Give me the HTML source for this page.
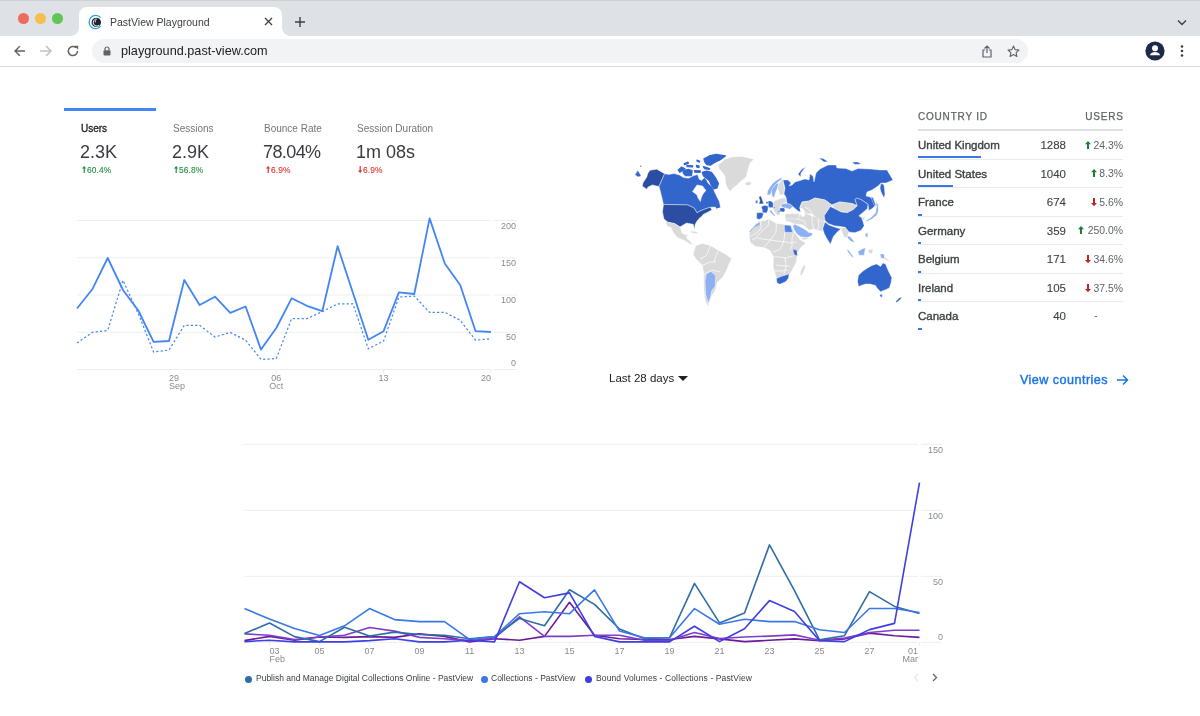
<!DOCTYPE html>
<html><head><meta charset="utf-8">
<style>
*{margin:0;padding:0;box-sizing:border-box}
html,body{width:1200px;height:716px;overflow:hidden;background:#fff;font-family:"Liberation Sans",sans-serif}
.abs{will-change:transform}
.abs{position:absolute;white-space:nowrap}
#strip{position:absolute;left:0;top:0;width:1200px;height:36px;background:#dee1e6;border-top:1px solid #cfd1d5}
.tl{position:absolute;top:12.3px;width:11px;height:11px;border-radius:50%}
#tab{position:absolute;left:79px;top:6px;width:203px;height:29px;background:#fff;border-radius:8px 8px 0 0}
#tab:before,#tab:after{content:"";position:absolute;bottom:0;width:8px;height:8px;background:radial-gradient(circle at 0 0,transparent 8px,#fff 8.5px)}
#tab:before{left:-8px;background:radial-gradient(circle at 0 0,#dee1e6 7.5px,#fff 8px)}
#tab:after{right:-8px;background:radial-gradient(circle at 100% 0,#dee1e6 7.5px,#fff 8px)}
#toolbar{position:absolute;left:0;top:36px;width:1200px;height:31px;background:#fff;border-bottom:1px solid #dadce0}
#omni{position:absolute;left:92px;top:3px;width:936px;height:24px;border-radius:12px;background:#f1f3f4}
.ax{font-family:"Liberation Sans",sans-serif;font-size:9px;fill:#878b90}
.kl{font-size:10px;color:#757575}
.kv{font-size:18px;color:#3a3c40}
.kc{font-size:8.4px;-webkit-text-stroke:0.1px currentColor}
.th{font-size:10px;color:#5f6368;letter-spacing:0.8px;-webkit-text-stroke:0.25px #5f6368}
.tn{font-size:11.5px;color:#3c4043;-webkit-text-stroke:0.35px #3c4043}
.tv{font-size:11.5px;color:#3c4043;text-align:right;-webkit-text-stroke:0.1px #3c4043}
.tp{font-size:10.4px;color:#5f6368;text-align:right}
.bar{position:absolute;height:2px;background:#3b78e7;left:918px}
.div{position:absolute;left:918px;width:205px;height:1px;background:#e8eaed}
</style></head><body>
<!-- browser chrome -->
<div id="strip">
  <div class="tl" style="left:17.9px;background:#ec6a5e"></div>
  <div class="tl" style="left:34.9px;background:#f4bf4f"></div>
  <div class="tl" style="left:51.6px;background:#61c554"></div>
  <div id="tab">
    <svg class="abs" style="left:9px;top:7px" width="16" height="16" viewBox="0 0 16 16">
      <path d="M12.6 3.6A6.6 6.6 0 1 0 12.8 12.2" fill="none" stroke="#2d9fe3" stroke-width="1.3"/>
      <circle cx="8.3" cy="8.4" r="4.7" fill="#1c2431"/>
      <path d="M11.2 11.2A3.6 3.6 0 1 1 8.6 4.9" fill="none" stroke="#fff" stroke-width="1"/>
      <circle cx="9" cy="7.6" r="2.4" fill="#1c2431"/>
      <path d="M8.6 5.6A2 2 0 0 0 7.4 8.4" fill="none" stroke="#fff" stroke-width="0.8"/>
    </svg>
    <div class="abs" style="left:30.5px;top:9px;font-size:10.5px;color:#3c4043">PastView Playground</div>
    <svg class="abs" style="left:185px;top:10px" width="9" height="9" viewBox="0 0 9 9"><path d="M1 1L8 8M8 1L1 8" stroke="#3c4043" stroke-width="1.3"/></svg>
  </div>
  <svg class="abs" style="left:294px;top:15px" width="12" height="12" viewBox="0 0 12 12"><path d="M6 1V11M1 6H11" stroke="#3c4043" stroke-width="1.4"/></svg>
  <svg class="abs" style="left:1177px;top:17.5px" width="10" height="7" viewBox="0 0 10 7"><path d="M1 1.5L5 5.5L9 1.5" fill="none" stroke="#3c4043" stroke-width="1.4"/></svg>
</div>
<div id="toolbar">
  <svg class="abs" style="left:12.5px;top:8px" width="14" height="14" viewBox="0 0 14 14"><path d="M12 7H2M6.8 2.2L2 7L6.8 11.8" fill="none" stroke="#5f6368" stroke-width="1.4"/></svg>
  <svg class="abs" style="left:39px;top:8px" width="14" height="14" viewBox="0 0 14 14"><path d="M1 7H12M7 2L12 7L7 12" fill="none" stroke="#bdc1c6" stroke-width="1.5"/></svg>
  <svg class="abs" style="left:66px;top:8px" width="14" height="14" viewBox="0 0 14 14"><path d="M11.5 7A4.6 4.6 0 1 1 10 3.6" fill="none" stroke="#5f6368" stroke-width="1.5"/><path d="M8.3 1.8H12.2V5.7Z" fill="#5f6368"/></svg>
  <div id="omni">
    <svg class="abs" style="left:11px;top:7px" width="8" height="10" viewBox="0 0 8 10"><path d="M2 4.5V3A2 2 0 0 1 6 3V4.5" fill="none" stroke="#5f6368" stroke-width="1.2"/><rect x="0.5" y="4.3" width="7" height="5.2" rx="1" fill="#5f6368"/></svg>
    <div class="abs" style="left:29px;top:4.5px;font-size:12.7px;color:#202124">playground.past-view.com</div>
    <svg class="abs" style="left:889px;top:6px" width="12" height="13" viewBox="0 0 12 13"><path d="M4 5H2V12H10V5H8M6 8V1M3.5 3.5L6 1L8.5 3.5" fill="none" stroke="#5f6368" stroke-width="1.2"/></svg>
    <svg class="abs" style="left:915px;top:6px" width="13" height="13" viewBox="0 0 13 13"><path d="M6.5 1L8.1 4.6L12 5L9.1 7.6L9.9 11.5L6.5 9.5L3.1 11.5L3.9 7.6L1 5L4.9 4.6Z" fill="none" stroke="#5f6368" stroke-width="1.1" stroke-linejoin="round"/></svg>
  </div>
  <svg class="abs" style="left:1145px;top:5px" width="20" height="20" viewBox="0 0 20 20"><circle cx="10" cy="10" r="9.6" fill="#1e2a4a"/><circle cx="10" cy="7.3" r="3" fill="#fff"/><path d="M4.8 14.2C5.5 11.8 8 11 10 11S14.5 11.8 15.2 14.2Z" fill="#fff"/></svg>
  <svg class="abs" style="left:1180px;top:8px" width="4" height="14" viewBox="0 0 4 14"><circle cx="2" cy="2.5" r="1.3" fill="#3c4043"/><circle cx="2" cy="7" r="1.3" fill="#3c4043"/><circle cx="2" cy="11.5" r="1.3" fill="#3c4043"/></svg>
</div>

<!-- KPI tabs -->
<div class="abs" style="left:64px;top:108px;width:92px;height:3px;background:#4285f4"></div>
<div class="abs kl" style="left:81px;top:123px;color:#202124;-webkit-text-stroke:0.3px #202124">Users</div>
<div class="abs kv" style="left:80px;top:142px">2.3K</div>
<svg class="abs" style="left:82.3px;top:166.2px" width="4.4" height="7" viewBox="0 0 4.4 7"><path d="M2.2 0L4.4 2.6H2.8V7H1.6V2.6H0Z" fill="#1e8e3e"/></svg><div class="abs kc" style="left:86.5px;top:165px;letter-spacing:0.1px;color:#1e8e3e">60.4%</div>
<div class="abs kl" style="left:173px;top:123px">Sessions</div>
<div class="abs kv" style="left:172px;top:142px">2.9K</div>
<svg class="abs" style="left:174.3px;top:166.2px" width="4.4" height="7" viewBox="0 0 4.4 7"><path d="M2.2 0L4.4 2.6H2.8V7H1.6V2.6H0Z" fill="#1e8e3e"/></svg><div class="abs kc" style="left:178.5px;top:165px;letter-spacing:0.1px;color:#1e8e3e">56.8%</div>
<div class="abs kl" style="left:264px;top:123px">Bounce Rate</div>
<div class="abs kv" style="left:263px;top:142px;letter-spacing:-0.6px">78.04%</div>
<svg class="abs" style="left:266.3px;top:166.2px" width="4.4" height="7" viewBox="0 0 4.4 7"><path d="M2.2 0L4.4 2.6H2.8V7H1.6V2.6H0Z" fill="#d93025"/></svg><div class="abs kc" style="left:270.5px;top:165px;letter-spacing:0.1px;color:#d93025">6.9%</div>
<div class="abs kl" style="left:357px;top:123px">Session Duration</div>
<div class="abs kv" style="left:356px;top:142px">1m 08s</div>
<svg class="abs" style="left:358.3px;top:166.2px" width="4.4" height="7" viewBox="0 0 4.4 7"><path d="M2.2 7L4.4 4.4H2.8V0H1.6V4.4H0Z" fill="#d93025"/></svg><div class="abs kc" style="left:362.5px;top:165px;letter-spacing:0.1px;color:#d93025">6.9%</div>

<svg class="abs" style="left:0;top:0" width="1200" height="716" viewBox="0 0 1200 716">
<line x1="77" y1="220.5" x2="491" y2="220.5" stroke="#eeeeee" stroke-width="1"/>
<line x1="494" y1="220.5" x2="517" y2="220.5" stroke="#eeeeee" stroke-width="1"/>
<line x1="77" y1="257.75" x2="491" y2="257.75" stroke="#eeeeee" stroke-width="1"/>
<line x1="494" y1="257.75" x2="517" y2="257.75" stroke="#eeeeee" stroke-width="1"/>
<line x1="77" y1="295" x2="491" y2="295" stroke="#eeeeee" stroke-width="1"/>
<line x1="494" y1="295" x2="517" y2="295" stroke="#eeeeee" stroke-width="1"/>
<line x1="77" y1="332.25" x2="491" y2="332.25" stroke="#eeeeee" stroke-width="1"/>
<line x1="494" y1="332.25" x2="517" y2="332.25" stroke="#eeeeee" stroke-width="1"/>
<line x1="77" y1="369.5" x2="491" y2="369.5" stroke="#eeeeee" stroke-width="1"/>
<line x1="494" y1="369.5" x2="517" y2="369.5" stroke="#eeeeee" stroke-width="1"/>
<text x="516" y="229" text-anchor="end" class="ax">200</text>
<text x="516" y="266" text-anchor="end" class="ax">150</text>
<text x="516" y="303" text-anchor="end" class="ax">100</text>
<text x="516" y="340" text-anchor="end" class="ax">50</text>
<text x="516" y="366" text-anchor="end" class="ax">0</text>
<line x1="169.0" y1="369" x2="169.0" y2="373" stroke="#eeeeee"/>
<text x="169.0" y="380.6" text-anchor="start" class="ax">29</text>
<text x="169.0" y="388.8" text-anchor="start" class="ax">Sep</text>
<line x1="276.3" y1="369" x2="276.3" y2="373" stroke="#eeeeee"/>
<text x="276.3" y="380.6" text-anchor="middle" class="ax">06</text>
<text x="276.3" y="388.8" text-anchor="middle" class="ax">Oct</text>
<line x1="383.6" y1="369" x2="383.6" y2="373" stroke="#eeeeee"/>
<text x="383.6" y="380.6" text-anchor="middle" class="ax">13</text>
<line x1="490.9" y1="369" x2="490.9" y2="373" stroke="#eeeeee"/>
<text x="490.9" y="380.6" text-anchor="end" class="ax">20</text>
<polyline points="77.0,343.0 92.3,332.4 107.7,330.4 123.0,280.3 138.3,313.6 153.6,352.0 169.0,350.0 184.3,325.3 199.6,325.3 215.0,337.0 230.3,332.4 245.6,340.2 261.0,359.4 276.3,358.6 291.6,318.7 306.9,318.7 322.3,311.6 337.6,303.8 352.9,303.8 368.3,348.8 383.6,341.0 398.9,297.1 414.3,296.0 429.6,312.4 444.9,312.4 460.2,320.3 475.6,340.2 490.9,338.7" fill="none" stroke="#4285f4" stroke-width="1.2" stroke-dasharray="2.2,2.2"/>
<polyline points="77.0,308.5 92.3,289.3 107.7,258.0 123.0,290.0 138.3,310.5 153.6,341.8 169.0,341.0 184.3,280.0 199.6,305.0 215.0,296.7 230.3,312.8 245.6,306.5 261.0,349.6 276.3,328.0 291.6,298.3 306.9,305.8 322.3,311.2 337.6,246.2 352.9,292.8 368.3,339.8 383.6,331.2 398.9,292.4 414.3,294.0 429.6,218.4 444.9,263.8 460.2,285.0 475.6,331.2 490.9,332.0" fill="none" stroke="#4285f4" stroke-width="1.8" stroke-linejoin="round"/>
<line x1="244" y1="444.3" x2="918" y2="444.3" stroke="#eeeeee"/>
<line x1="921" y1="444.3" x2="942" y2="444.3" stroke="#eeeeee"/>
<text x="943" y="453.1" text-anchor="end" class="ax">150</text>
<line x1="244" y1="510.3" x2="918" y2="510.3" stroke="#eeeeee"/>
<line x1="921" y1="510.3" x2="942" y2="510.3" stroke="#eeeeee"/>
<text x="943" y="519.1" text-anchor="end" class="ax">100</text>
<line x1="244" y1="576.3" x2="918" y2="576.3" stroke="#eeeeee"/>
<line x1="921" y1="576.3" x2="942" y2="576.3" stroke="#eeeeee"/>
<text x="943" y="585.1" text-anchor="end" class="ax">50</text>
<line x1="244" y1="642.3" x2="918" y2="642.3" stroke="#eeeeee"/>
<line x1="921" y1="642.3" x2="942" y2="642.3" stroke="#eeeeee"/>
<text x="943" y="639.8" text-anchor="end" class="ax">0</text>
<line x1="269.5" y1="642" x2="269.5" y2="646" stroke="#eeeeee"/>
<text x="269.5" y="654" class="ax">03</text>
<text x="269.5" y="662.2" class="ax">Feb</text>
<line x1="319.5" y1="642" x2="319.5" y2="646" stroke="#eeeeee"/>
<text x="319.5" y="654" text-anchor="middle" class="ax">05</text>
<line x1="369.5" y1="642" x2="369.5" y2="646" stroke="#eeeeee"/>
<text x="369.5" y="654" text-anchor="middle" class="ax">07</text>
<line x1="419.5" y1="642" x2="419.5" y2="646" stroke="#eeeeee"/>
<text x="419.5" y="654" text-anchor="middle" class="ax">09</text>
<line x1="469.5" y1="642" x2="469.5" y2="646" stroke="#eeeeee"/>
<text x="469.5" y="654" text-anchor="middle" class="ax">11</text>
<line x1="519.5" y1="642" x2="519.5" y2="646" stroke="#eeeeee"/>
<text x="519.5" y="654" text-anchor="middle" class="ax">13</text>
<line x1="569.5" y1="642" x2="569.5" y2="646" stroke="#eeeeee"/>
<text x="569.5" y="654" text-anchor="middle" class="ax">15</text>
<line x1="619.5" y1="642" x2="619.5" y2="646" stroke="#eeeeee"/>
<text x="619.5" y="654" text-anchor="middle" class="ax">17</text>
<line x1="669.5" y1="642" x2="669.5" y2="646" stroke="#eeeeee"/>
<text x="669.5" y="654" text-anchor="middle" class="ax">19</text>
<line x1="719.5" y1="642" x2="719.5" y2="646" stroke="#eeeeee"/>
<text x="719.5" y="654" text-anchor="middle" class="ax">21</text>
<line x1="769.5" y1="642" x2="769.5" y2="646" stroke="#eeeeee"/>
<text x="769.5" y="654" text-anchor="middle" class="ax">23</text>
<line x1="819.5" y1="642" x2="819.5" y2="646" stroke="#eeeeee"/>
<text x="819.5" y="654" text-anchor="middle" class="ax">25</text>
<line x1="869.5" y1="642" x2="869.5" y2="646" stroke="#eeeeee"/>
<text x="869.5" y="654" text-anchor="middle" class="ax">27</text>
<line x1="919.5" y1="642" x2="919.5" y2="646" stroke="#eeeeee"/>
<text x="918" y="654" text-anchor="end" class="ax">01</text>
<text x="918" y="662.2" text-anchor="end" class="ax">Mar</text>
<polyline points="244.5,640.6 269.5,636.4 294.5,640.2 319.5,637.0 344.5,637.4 369.5,636.6 394.5,637.4 419.5,633.9 444.5,636.4 469.5,641.9 494.5,638.7 519.5,640.2 544.5,636.4 569.5,602.3 594.5,635.3 619.5,638.7 644.5,639.5 669.5,639.5 694.5,636.4 719.5,638.9 744.5,641.6 769.5,640.3 794.5,638.9 819.5,640.7 844.5,639.0 869.5,633.1 894.5,635.8 919.5,637.4" fill="none" stroke="#6a1b9a" stroke-width="1.6" stroke-linejoin="round"/>
<polyline points="244.5,633.9 269.5,635.3 294.5,639.5 319.5,637.0 344.5,635.3 369.5,627.5 394.5,631.1 419.5,637.4 444.5,638.7 469.5,640.6 494.5,638.1 519.5,616.8 544.5,636.4 569.5,636.4 594.5,635.3 619.5,635.3 644.5,640.2 669.5,640.2 694.5,632.5 719.5,638.5 744.5,637.0 769.5,636.1 794.5,634.9 819.5,640.3 844.5,638.1 869.5,632.5 894.5,630.3 919.5,630.3" fill="none" stroke="#7e3fc8" stroke-width="1.6" stroke-linejoin="round"/>
<polyline points="244.5,633.6 269.5,623.0 294.5,636.6 319.5,641.6 344.5,627.3 369.5,636.0 394.5,632.1 419.5,634.5 444.5,635.3 469.5,638.7 494.5,636.6 519.5,618.4 544.5,625.8 569.5,589.8 594.5,604.4 619.5,629.0 644.5,638.7 669.5,637.8 694.5,583.4 719.5,622.9 744.5,613.0 769.5,544.9 794.5,590.6 819.5,639.8 844.5,635.7 869.5,591.6 894.5,606.4 919.5,613.5" fill="none" stroke="#2e6da4" stroke-width="1.6" stroke-linejoin="round"/>
<polyline points="244.5,608.6 269.5,619.1 294.5,628.6 319.5,635.6 344.5,625.8 369.5,608.6 394.5,619.6 419.5,621.6 444.5,621.6 469.5,639.5 494.5,636.6 519.5,613.7 544.5,611.7 569.5,613.7 594.5,589.8 619.5,631.1 644.5,637.8 669.5,637.8 694.5,608.6 719.5,624.2 744.5,619.3 769.5,621.6 794.5,621.6 819.5,629.8 844.5,632.5 869.5,608.5 894.5,608.5 919.5,612.5" fill="none" stroke="#3b78e7" stroke-width="1.6" stroke-linejoin="round"/>
<polyline points="244.5,641.6 269.5,640.2 294.5,641.9 319.5,641.9 344.5,641.9 369.5,640.6 394.5,638.7 419.5,641.9 444.5,641.9 469.5,640.2 494.5,641.9 519.5,581.8 544.5,597.7 569.5,592.9 594.5,636.4 619.5,641.9 644.5,641.9 669.5,641.9 694.5,626.2 719.5,641.6 744.5,628.8 769.5,600.6 794.5,611.5 819.5,640.7 844.5,641.6 869.5,629.6 894.5,623.4 919.5,482.7" fill="none" stroke="#3f3ee3" stroke-width="1.6" stroke-linejoin="round"/>
<polygon points="718.2,164.8 725,159.2 733,156.8 741.7,156.4 754,159.2 750,163 748.4,168.1 746.2,177 741,181 737.2,184.9 733,188 730.5,191.6 727.5,188 726,184.9 724.9,176 722,172 719.3,169.2" fill="#dadada" stroke="#fff" stroke-width="0.4"/>
<polygon points="745,183 749,181.5 752,183 749,185.5 745.5,185" fill="#dadada" stroke="#fff" stroke-width="0.4"/>
<polygon points="650.1,170.3 656.8,169.2 664.6,173.7 659,186.5 652.3,184.9 648,187 646.8,189.3 642.3,186 643,183 644.5,180.4 646.8,177 648,173" fill="#2b4ea3" stroke="#fff" stroke-width="0.4"/>
<polygon points="635,174.8 637.8,170.3 641.2,176 638,177" fill="#3366cc" stroke="#fff" stroke-width="0.4"/>
<polygon points="640,165.5 641.5,165.5 641.5,167 640,167" fill="#3366cc" stroke="#fff" stroke-width="0.4"/>
<path d="M664.6,173.7 L669,174.5 L674,173.5 L679.9,175.2 L683.4,177.6 L688.7,178.2 L693.4,175.8 L697.5,174.6 L699.2,179.3 L701.6,180.5 L704.5,177.6 L706.8,180.5 L708,183 L711,186 L713,188 L714.9,192.7 L717,197 L719.3,201.6 L720.5,207.2 L716,207 L710.4,207.2 L705,209 L700,211 L697,212.8 L694,208 L688,205 L663.5,204.4 L662,198 L660,190 L659,186.5Z M692.5,191.6 L697,184.9 L702.6,186 L705.9,190.4 L703,194 L701.5,197.1 L700.4,201.6 L698,198 L697,194.9Z " fill="#3366cc" fill-rule="evenodd" stroke="#fff" stroke-width="0.4"/>
<polygon points="703.9,158.8 709.2,155.9 716.2,154.4 725.6,155.9 720.9,159.4 715.1,162.3 710.4,165.2 706.8,164.7 704.5,161.7" fill="#3366cc" stroke="#3366cc" stroke-width="1.1" stroke-linejoin="round"/>
<polygon points="703.3,166.4 706.8,167.6 709.8,168.8 709.2,169.4 704.5,168.8" fill="#3366cc" stroke="#3366cc" stroke-width="1.1" stroke-linejoin="round"/>
<polygon points="702.2,172.3 706.8,171.1 711.5,172.3 715.1,177 718.6,183.4 717,188 714,189 711.5,186 709.2,180.5 703.3,175.8" fill="#3366cc" stroke="#3366cc" stroke-width="1.1" stroke-linejoin="round"/>
<polygon points="682.8,170.5 688.7,169.4 692.2,170.5 691.6,175.8 685.7,175.8 683.4,173.5" fill="#3366cc" stroke="#3366cc" stroke-width="1.1" stroke-linejoin="round"/>
<polygon points="678.1,169.9 681.6,167 685.1,168.8 679.9,172.3" fill="#3366cc" stroke="#3366cc" stroke-width="1.1" stroke-linejoin="round"/>
<polygon points="684,163.8 688,162 688.5,163.2 684.5,164.8" fill="#3366cc" stroke="#3366cc" stroke-width="1.1" stroke-linejoin="round"/>
<polygon points="686.9,165.2 692.8,165.8 692.5,167 687,166.6" fill="#3366cc" stroke="#3366cc" stroke-width="1.1" stroke-linejoin="round"/>
<polygon points="696.9,160 699.8,161.2 699.5,162.2 697,161.2" fill="#3366cc" stroke="#3366cc" stroke-width="1.1" stroke-linejoin="round"/>
<polygon points="696.3,165.2 699.2,166 699,167.8 696.5,167" fill="#3366cc" stroke="#3366cc" stroke-width="1.1" stroke-linejoin="round"/>
<polygon points="694.5,170.5 700.4,170.8 700,172.5 694.8,172.3" fill="#3366cc" stroke="#3366cc" stroke-width="1.1" stroke-linejoin="round"/>
<polygon points="715.5,205 718,204 719.5,207 716.5,208" fill="#3366cc" stroke="#3366cc" stroke-width="1.1" stroke-linejoin="round"/>
<polygon points="663.5,204.4 688,205 694,208 697,212.8 700,211 705,209 710.4,207.2 711.9,210 708,212 703.5,214.2 701,217 699.8,217.7 697,221 695.2,224.3 694.5,228.9 693.2,224.3 686.5,223 679.9,226.9 674.6,223.6 668,222.3 664,219 662.5,212" fill="#2b4ea3" stroke="#fff" stroke-width="0.4"/>
<polygon points="665.3,222.3 668,222.3 674.6,223.6 679.9,226.9 682.6,233.6 686.5,234.9 687.9,233.6 686.5,238.2 690.5,241.5 693.2,245.5 690.5,244.2 683.9,240.2 677.2,237.6 673.3,232.2 670.6,226.9 668,226.9" fill="#dadada" stroke="#fff" stroke-width="0.4"/>
<polygon points="689,231 696,231.5 699,233.5 693,233.2" fill="#dadada" stroke="#fff" stroke-width="0.4"/>
<polygon points="695.8,245.5 702.5,243.5 710.4,245.5 718.4,250.2 726.3,254.8 731.6,258.8 729,264.1 726.3,270.7 722.4,277.4 717,282.7 715.7,289.3 711.7,295.9 709.1,302.6 707.8,306.5 705.1,299.9 703.8,289.3 703.8,274.7 702.5,265.4 695.8,258.8 693.2,254.8 694.5,249.5" fill="#dadada" stroke="#fff" stroke-width="0.4"/>
<polygon points="706.4,273.4 711.1,271.4 715.7,276 715.1,286.6 711.7,290.6 710.4,297.3 708.4,303.2 705.8,294.6 705.1,281.3" fill="#8cb0f2" stroke="#fff" stroke-width="0.4"/>
<polygon points="749.2,233.9 751.3,228.6 755.5,225.5 760.7,221.3 769.1,219.2 776.4,223.4 784.8,224.4 791.1,225.5 794.3,231.8 799.5,239.1 805.8,243.3 801.6,246.4 797.4,252.7 796.3,262.2 790.1,273.7 786.9,280 779.6,284.2 776.4,277.9 773.3,267.4 773.3,256.9 770.1,250.6 763.9,247.5 755.5,246.4 750.2,242.2" fill="#dadada" stroke="#fff" stroke-width="0.4"/>
<polygon points="755.5,224.4 760.7,221.3 759.7,225.5 754.4,227.6 750.2,232.8 749.2,231.8" fill="#8cb0f2" stroke="#fff" stroke-width="0.4"/>
<polygon points="784.3,225 790.6,225.5 792.7,232.3 784.8,232.3" fill="#4f82e8" stroke="#fff" stroke-width="0.4"/>
<polygon points="792.7,249.6 796.9,250.1 797.4,255.9 794.3,254.8" fill="#3366cc" stroke="#fff" stroke-width="0.4"/>
<polygon points="776.4,278.5 781,276.5 786.9,274.7 789,273.7 788.5,278 786,281.5 780,284.2 777,283" fill="#3366cc" stroke="#fff" stroke-width="0.4"/>
<polygon points="800,274.5 801.5,269 804.5,264.5 805.5,266 804,271 801.5,275.5" fill="#dadada" stroke="#fff" stroke-width="0.4"/>
<polygon points="785.1,214.1 792,213.5 799.7,214.1 799.7,219 792,219.5 785.1,219" fill="#dadada" stroke="#fff" stroke-width="0.4"/>
<polygon points="785.1,219 798.8,218.9 800,214 804.5,213 808,214 812,216 818,217 824,218.4 825,220.4 822.7,228.8 822.7,231.4 817.7,230.2 813.3,228.9 808.9,230.2 806,227 802,224.5 797,224.2 793,223.5 790,222 786,221" fill="#dadada" stroke="#fff" stroke-width="0.4"/>
<polygon points="792.8,225.8 795,224.3 801.3,227.5 805.7,230 808.9,232.5 812.8,233.2 811.6,235.8 807,237.8 800.5,236.8 796.5,233.5 794,229.5" fill="#8cb0f2" stroke="#fff" stroke-width="0.4"/>
<polygon points="801,237 807,238 809.5,239 803,240" fill="#dadada" stroke="#fff" stroke-width="0.4"/>
<polygon points="774,201.2 777.4,199.8 781.3,198.3 785.2,197.8 786.7,202.2 781.8,203.7 780.3,207.6 779.3,211.5 780.3,214.4 777.4,215.4 775.4,213 773.5,209.6 773,206.6 773.5,203.7" fill="#dadada" stroke="#fff" stroke-width="0.4"/>
<polygon points="785.2,197.8 786,197 787,203 786.7,202.2" fill="#dadada" stroke="#fff" stroke-width="0.4"/>
<polygon points="767.1,194.9 767.6,191 770,187 773,183 777,180 781.2,177.5 782,179 778,182 774,186.5 771,192.9 769.6,194.9" fill="#8cb0f2" stroke="#fff" stroke-width="0.4"/>
<polygon points="771.5,190 774,186.5 777,183 778.5,184 777.5,188 775.4,192.9 774,197.8 772,195.9" fill="#8cb0f2" stroke="#fff" stroke-width="0.4"/>
<polygon points="778.5,184 782,179 783,179.5 784.1,186 784.1,194.5 780,195 778.2,190 777.5,188" fill="#dadada" stroke="#fff" stroke-width="0.4"/>
<polygon points="758.7,197 761,196 762,199 763.6,203.8 759,204 760,200.5" fill="#2b4ea3" stroke="#fff" stroke-width="0.4"/>
<polygon points="755.7,200.4 757.7,200.4 757.7,203.3 755.7,203.3" fill="#3366cc" stroke="#fff" stroke-width="0.4"/>
<polygon points="761.1,207 764,205.3 768,206 768,210 766.5,213.1 762,212.5 762.5,210" fill="#3366cc" stroke="#fff" stroke-width="0.4"/>
<polygon points="768,201 771,200.9 773.3,203 773,207.7 768.5,207.5" fill="#3366cc" stroke="#fff" stroke-width="0.4"/>
<polygon points="756.7,212.8 761,212.6 763.6,213.5 762,218 759,219.5 756.7,218.5" fill="#3366cc" stroke="#fff" stroke-width="0.4"/>
<polygon points="769.6,210.5 771.5,210 773,213 775.4,215.4 774.4,215.9 772,214 770,212" fill="#8cb0f2" stroke="#fff" stroke-width="0.4"/>
<polygon points="766.1,201.7 768.1,201.7 768.1,203.7 766.1,203.7" fill="#3366cc" stroke="#fff" stroke-width="0.4"/>
<polygon points="773.5,207.1 775,207.1 775,208.6 773.5,208.6" fill="#3366cc" stroke="#fff" stroke-width="0.4"/>
<polygon points="778.3,210.5 779.8,210.5 779.8,212.5 778.3,212.5" fill="#3366cc" stroke="#fff" stroke-width="0.4"/>
<polygon points="779.7,208 784,207.7 785.1,210 784,212.1 780,211.5" fill="#3366cc" stroke="#fff" stroke-width="0.4"/>
<polygon points="781.2,204 786,203.3 790,204 792.9,206.5 790,209.2 785,208 781.5,207" fill="#8cb0f2" stroke="#fff" stroke-width="0.4"/>
<polygon points="783,180 788,180 791,183 789,186 792,185 795,182 805,179 809,180 810,174 813,176 814,182 816,173 820,169 828,165 836,165 837,168 846,168.5 852,171 858,168.5 870,169 880,170 887,170 890,175 893,180 886,183 881,183 878,186 872,190 867,192 866,196 870,197 873.4,199.6 875.7,205 871.9,208.8 868.8,210.4 868,204.2 861.1,199.6 856.5,198.1 855,199.6 857.3,205.8 851.9,203.5 839.6,201.9 831.9,205 825,200 815,198 809,201 802,202 800,207 801,212 798,211 792.9,206.5 790,204 786,203.3 787,203 786,197 784,194 785,188" fill="#3366cc" stroke="#fff" stroke-width="0.4"/>
<polygon points="881,183 884,185 885,194 884,198 881,192 880,188" fill="#3366cc" stroke="#fff" stroke-width="0.4"/>
<polygon points="871,197 873,197.5 876,206 874,205" fill="#3366cc" stroke="#fff" stroke-width="0.4"/>
<polygon points="798,174 802,169 806.5,167 804,169 801,173 800.5,177" fill="#3366cc" stroke="#fff" stroke-width="0.4"/>
<polygon points="819,158 823,158.5 828,161.5 824,162" fill="#3366cc" stroke="#fff" stroke-width="0.4"/>
<polygon points="852,162 858,162 861,164 855,164.5" fill="#3366cc" stroke="#fff" stroke-width="0.4"/>
<polygon points="800,207 802,202 809,201 815,198 825,200 831.9,205 830.4,206.5 824.2,215.7 825,220.4 822.7,222 818,219 812,214 806,213.5 801,212" fill="#dadada" stroke="#fff" stroke-width="0.4"/>
<polygon points="799.6,208 802.5,208.5 804.8,211.5 804.6,215.8 802.3,217 800.6,214.5 801,211.2" fill="#ffffff" stroke="#fff" stroke-width="0.4"/>
<polygon points="831.9,205 839.6,201.9 851.9,203.5 857.3,205.8 853.4,209.6 847.3,212.7 841.1,211.9 835,208.8" fill="#dadada" stroke="#fff" stroke-width="0.4"/>
<polygon points="824.2,215.7 830.4,206.5 835,208.8 841.1,211.9 847.3,212.7 853.4,209.6 857.3,205.8 855,199.6 856.5,198.1 861.1,199.6 868,204.2 867.3,208.8 862.6,212.7 858.8,215.7 861.9,218.1 864.2,225.7 861.1,230.3 855,232.7 848.8,231.9 845,227.3 840.4,226.5 834.2,225.7 828.1,223.4 825,220.4" fill="#3366cc" stroke="#fff" stroke-width="0.4"/>
<polygon points="822.7,228.8 825,221.9 828.8,224.9 835,227.3 840.4,228.8 842.7,227.3 837.3,231.9 833.4,236.5 830.4,244.2 826.5,238 824.2,233.4" fill="#3366cc" stroke="#fff" stroke-width="0.4"/>
<polygon points="841.1,228 845,227.3 848.8,231.9 847.3,238 844,237 842,232" fill="#dadada" stroke="#fff" stroke-width="0.4"/>
<polygon points="847.3,235.7 850,236.5 855,242.6 851,241.5 848,238.5" fill="#8cb0f2" stroke="#fff" stroke-width="0.4"/>
<polygon points="862,217 865,216.5 864.5,220 862.5,220" fill="#dadada" stroke="#fff" stroke-width="0.4"/>
<polygon points="876,202 878,204 878.5,210 877,215 872,219 867,221.5 866,220.5 871,217.5 875.5,213 876.5,207" fill="#8cb0f2" stroke="#fff" stroke-width="0.4"/>
<polygon points="865,234 868,232.5 867.5,237.5 865.5,236.5" fill="#8cb0f2" stroke="#fff" stroke-width="0.4"/>
<polygon points="846.6,248.9 849,250.5 854.1,257.7 852,257 848,252" fill="#8cb0f2" stroke="#fff" stroke-width="0.4"/>
<polygon points="857.9,251.4 862,249 865.4,247.7 864.1,255.2 859.1,255.2" fill="#8cb0f2" stroke="#fff" stroke-width="0.4"/>
<polygon points="868,250 873,249 872,254 869,253" fill="#dadada" stroke="#fff" stroke-width="0.4"/>
<polygon points="880,254 884,254 885,259 881,258" fill="#8cb0f2" stroke="#fff" stroke-width="0.4"/>
<polygon points="884.3,256.5 890.5,261.5 885.5,260.2" fill="#dadada" stroke="#fff" stroke-width="0.4"/>
<polygon points="858.5,275.3 863,271 867.9,267.8 872,265.5 876.7,264 880.5,266.5 883,263 885.5,264 888,270 891.8,277.8 891,283 889.3,287.9 885,290 880.5,291.7 877,288 875.5,285.4 870,284 865.4,284.1 861,285.5 858.5,286.6 857.5,281" fill="#3366cc" stroke="#fff" stroke-width="0.4"/>
<polygon points="879.9,294.2 882.4,294.5 882,297.3 880,296.5" fill="#3366cc" stroke="#fff" stroke-width="0.4"/>
<polygon points="895.6,301.7 899,298 901.9,296.7 900,300 896.5,302.5" fill="#3366cc" stroke="#fff" stroke-width="0.4"/>
<polyline points="760.7,221.3 761,228 757,233 750.5,236" fill="none" stroke="#fff" stroke-width="0.7"/>
<polyline points="769.1,219.2 768,226 762,231 756,238 752,240" fill="none" stroke="#fff" stroke-width="0.7"/>
<polyline points="776.4,223.4 776,232 772,238 768,243 764,247" fill="none" stroke="#fff" stroke-width="0.7"/>
<polyline points="784.8,232.3 784,240 782,246 779,250 773,252" fill="none" stroke="#fff" stroke-width="0.7"/>
<polyline points="757,238 763,239 770,240 777,241 786,242 792,243 797,242" fill="none" stroke="#fff" stroke-width="0.7"/>
<polyline points="794.3,231.8 792,238 792,246 790,250" fill="none" stroke="#fff" stroke-width="0.7"/>
<polyline points="773.3,256.9 780,257 786,258 793,256" fill="none" stroke="#fff" stroke-width="0.7"/>
<polyline points="776,265 783,266 790,266" fill="none" stroke="#fff" stroke-width="0.7"/>
<polyline points="774,271 781,271 788,270" fill="none" stroke="#fff" stroke-width="0.7"/>
<polyline points="785,258 786,266 784,274" fill="none" stroke="#fff" stroke-width="0.7"/>
<polyline points="702.5,265.4 710,262 716,262" fill="none" stroke="#fff" stroke-width="0.7"/>
<polyline points="703.8,274.7 712,270 720,272" fill="none" stroke="#fff" stroke-width="0.7"/>
<polyline points="710.4,245.5 708,252 706,256 700,259" fill="none" stroke="#fff" stroke-width="0.7"/>
<polyline points="718.4,250.2 716,256 714,262" fill="none" stroke="#fff" stroke-width="0.7"/>
<polyline points="805,207 810,210 812,214" fill="none" stroke="#fff" stroke-width="0.7"/>
<polyline points="812,214 812,222 814,230" fill="none" stroke="#fff" stroke-width="0.7"/>
<polyline points="818,219 819,226 817,231" fill="none" stroke="#fff" stroke-width="0.7"/>
<polyline points="797,219 804,221 806,225" fill="none" stroke="#fff" stroke-width="0.7"/>
</svg>

<!-- table -->
<div class="abs th" style="left:918px;top:111.3px">COUNTRY ID</div>
<div class="abs th" style="left:1023px;width:100.8px;text-align:right;top:111.3px;letter-spacing:0.8px;margin-right:-0.8px">USERS</div>
<div class="abs" style="left:918px;top:129px;width:205px;height:2px;background:#e0e0e0"></div>

<div class="abs tn" style="left:918px;top:139.1px">United Kingdom</div>
<div class="abs tv" style="left:1000px;top:139.1px;width:66px">1288</div>
<div class="abs tp" style="left:1040px;top:139.7px;width:83px">24.3%</div>
<svg class="abs" style="left:1084.8px;top:140.8px" width="6" height="8.2" viewBox="0 0 6 8.2"><path d="M3 0L6 3.3H4V8.2H2V3.3H0Z" fill="#1e7e34"/></svg>
<div class="bar" style="top:156.4px;width:62.5px"></div>
<div class="div" style="top:158.6px"></div>
<div class="abs tn" style="left:918px;top:167.7px">United States</div>
<div class="abs tv" style="left:1000px;top:167.7px;width:66px">1040</div>
<div class="abs tp" style="left:1040px;top:168.2px;width:83px">8.3%</div>
<svg class="abs" style="left:1091.2px;top:169.3px" width="6" height="8.2" viewBox="0 0 6 8.2"><path d="M3 0L6 3.3H4V8.2H2V3.3H0Z" fill="#1e7e34"/></svg>
<div class="bar" style="top:185.0px;width:35px"></div>
<div class="div" style="top:187.2px"></div>
<div class="abs tn" style="left:918px;top:196.2px">France</div>
<div class="abs tv" style="left:1000px;top:196.2px;width:66px">674</div>
<div class="abs tp" style="left:1040px;top:196.8px;width:83px">5.6%</div>
<svg class="abs" style="left:1091.2px;top:197.9px" width="6" height="8.2" viewBox="0 0 6 8.2"><path d="M3 8.2L6 4.9H4V0H2V4.9H0Z" fill="#c5221f"/></svg>
<div class="bar" style="top:213.5px;width:3.5px"></div>
<div class="div" style="top:215.7px"></div>
<div class="abs tn" style="left:918px;top:224.8px">Germany</div>
<div class="abs tv" style="left:1000px;top:224.8px;width:66px">359</div>
<div class="abs tp" style="left:1040px;top:225.3px;width:83px">250.0%</div>
<svg class="abs" style="left:1078.4px;top:226.4px" width="6" height="8.2" viewBox="0 0 6 8.2"><path d="M3 0L6 3.3H4V8.2H2V3.3H0Z" fill="#1e7e34"/></svg>
<div class="bar" style="top:242.1px;width:2.5px"></div>
<div class="div" style="top:244.2px"></div>
<div class="abs tn" style="left:918px;top:253.3px">Belgium</div>
<div class="abs tv" style="left:1000px;top:253.3px;width:66px">171</div>
<div class="abs tp" style="left:1040px;top:253.9px;width:83px">34.6%</div>
<svg class="abs" style="left:1084.8px;top:255.0px" width="6" height="8.2" viewBox="0 0 6 8.2"><path d="M3 8.2L6 4.9H4V0H2V4.9H0Z" fill="#c5221f"/></svg>
<div class="bar" style="top:270.6px;width:2.5px"></div>
<div class="div" style="top:272.8px"></div>
<div class="abs tn" style="left:918px;top:281.9px">Ireland</div>
<div class="abs tv" style="left:1000px;top:281.9px;width:66px">105</div>
<div class="abs tp" style="left:1040px;top:282.5px;width:83px">37.5%</div>
<svg class="abs" style="left:1084.8px;top:283.6px" width="6" height="8.2" viewBox="0 0 6 8.2"><path d="M3 8.2L6 4.9H4V0H2V4.9H0Z" fill="#c5221f"/></svg>
<div class="bar" style="top:299.2px;width:2.5px"></div>
<div class="div" style="top:301.4px"></div>
<div class="abs tn" style="left:918px;top:310.4px">Canada</div>
<div class="abs tv" style="left:1000px;top:310.4px;width:66px">40</div>
<div class="abs tp" style="left:1094px;top:310.4px">-</div>
<div class="bar" style="top:327.7px;width:3.5px"></div>
<!-- controls -->
<div class="abs" style="left:608.5px;top:372px;font-size:11.5px;color:#202124">Last 28 days</div>
<svg class="abs" style="left:678px;top:376px" width="10" height="6" viewBox="0 0 10 6"><path d="M0 0H10L5 5Z" fill="#202124"/></svg>
<div class="abs" style="left:1019.5px;top:373px;font-size:12.6px;color:#1a73e8;-webkit-text-stroke:0.4px #1a73e8;letter-spacing:0.45px">View countries</div>
<svg class="abs" style="left:1116px;top:374px" width="13" height="12" viewBox="0 0 13 12"><path d="M1 6H11.5M7 1.5L11.5 6L7 10.5" fill="none" stroke="#1a73e8" stroke-width="1.5"/></svg>

<!-- legend -->
<div class="abs" style="left:245px;top:676px;width:7px;height:7px;border-radius:50%;background:#2e6da4"></div>
<div class="abs" style="left:256px;top:673px;font-size:8.5px;color:#3c4043">Publish and Manage Digital Collections Online - PastView</div>
<div class="abs" style="left:481px;top:676px;width:7px;height:7px;border-radius:50%;background:#3b78e7"></div>
<div class="abs" style="left:491px;top:673px;font-size:8.5px;color:#3c4043">Collections - PastView</div>
<div class="abs" style="left:585px;top:676px;width:7px;height:7px;border-radius:50%;background:#3f3ee3"></div>
<div class="abs" style="left:596px;top:673px;font-size:8.5px;letter-spacing:0.12px;color:#3c4043">Bound Volumes - Collections - PastView</div>
<svg class="abs" style="left:913px;top:673px" width="6" height="9" viewBox="0 0 6 9"><path d="M5 1L1.5 4.5L5 8" fill="none" stroke="#e3e5e8" stroke-width="1.2"/></svg>
<svg class="abs" style="left:932px;top:673px" width="6" height="9" viewBox="0 0 6 9"><path d="M1 1L4.5 4.5L1 8" fill="none" stroke="#5f6368" stroke-width="1.3"/></svg>
</body></html>
